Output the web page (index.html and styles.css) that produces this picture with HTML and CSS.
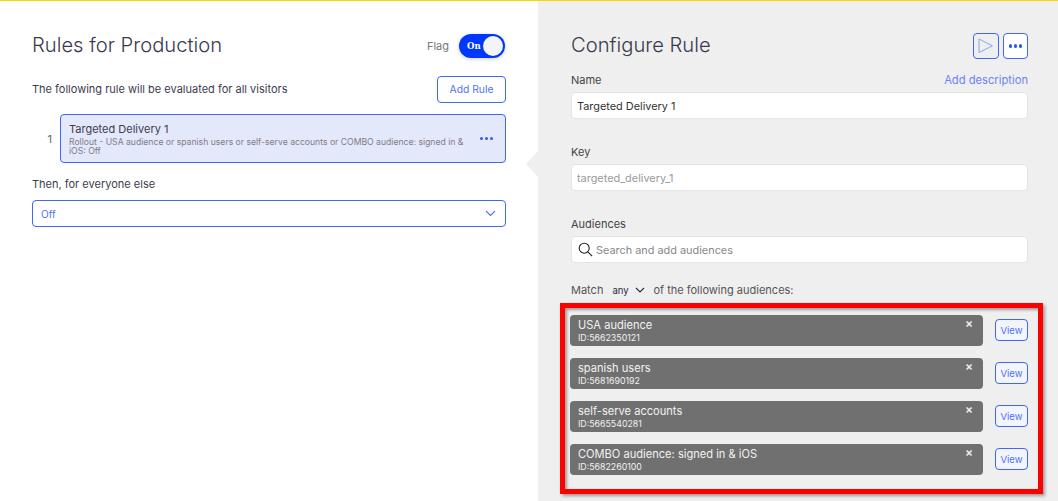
FILE: index.html
```html
<!DOCTYPE html>
<html lang="en">
<head>
<meta charset="utf-8">
<title>Rules for Production</title>
<link rel="stylesheet" href="styles.css">
</head>
<body>
<div class="topline"></div>
<main class="layout">
  <section class="left">
    <header class="left-head">
      <h1 class="title">Rules for Production</h1>
      <div class="flag">
        <span class="flag-label">Flag</span>
        <div class="toggle"><span class="toggle-text">On</span><span class="knob"></span></div>
      </div>
    </header>
    <div class="rule-intro">
      <span>The following rule will be evaluated for all visitors</span>
      <button class="btn add-rule">Add Rule</button>
    </div>
    <div class="rule-row">
      <span class="rule-num">1</span>
      <div class="rule-card">
        <div class="rule-body">
          <div class="rule-name">Targeted Delivery 1</div>
          <div class="rule-desc">Rollout - USA audience or spanish users or self-serve accounts or COMBO audience: signed in &amp; iOS: Off</div>
        </div>
        <div class="dots"><i></i><i></i><i></i></div>
      </div>
    </div>
    <div class="then">Then, for everyone else</div>
    <div class="select">
      <span>Off</span>
      <svg width="11" height="7" viewBox="0 0 11 7" fill="none" stroke="#4f73f5" stroke-width="1.1"><path d="M1 1l4.5 4.5L10 1"/></svg>
    </div>
  </section>
  <section class="right">
    <div class="pointer"></div>
    <header class="right-head">
      <h2 class="title">Configure Rule</h2>
      <div class="actions">
        <button class="icon-btn play"><svg width="16" height="16" viewBox="0 0 16 16" fill="none" stroke="#8ba3f7" stroke-width="1"><path d="M1 1v13.5l13.5-6.7z"/></svg></button>
        <button class="icon-btn"><span class="dots"><i></i><i></i><i></i></span></button>
      </div>
    </header>
    <div class="label-row name-row"><label>Name</label><a class="link">Add description</a></div>
    <div class="field">Targeted Delivery 1</div>
    <div class="label-row"><label>Key</label></div>
    <div class="field muted">targeted_delivery_1</div>
    <div class="label-row"><label>Audiences</label></div>
    <div class="field search">
      <svg width="15" height="15" viewBox="0 0 15 15" fill="none" stroke="#222" stroke-width="1.1"><circle cx="6.2" cy="6.2" r="5"/><path d="M9.8 9.8l4.4 4.4"/></svg>
      <span>Search and add audiences</span>
    </div>
    <div class="match">
      <span>Match</span>
      <span class="any">any
        <svg width="10" height="6" viewBox="0 0 10 6" fill="none" stroke="#2b2b3d" stroke-width="1.1"><path d="M1 1l4 4 4-4"/></svg>
      </span>
      <span>of the following audiences:</span>
    </div>
    <ul class="audiences">
      <li class="aud">
        <div class="chip"><div class="chip-name">USA audience</div><div class="chip-id">ID:5662350121</div><span class="chip-x">×</span></div>
        <button class="btn view">View</button>
      </li>
      <li class="aud">
        <div class="chip"><div class="chip-name">spanish users</div><div class="chip-id">ID:5681690192</div><span class="chip-x">×</span></div>
        <button class="btn view">View</button>
      </li>
      <li class="aud">
        <div class="chip"><div class="chip-name">self-serve accounts</div><div class="chip-id">ID:5665540281</div><span class="chip-x">×</span></div>
        <button class="btn view">View</button>
      </li>
      <li class="aud">
        <div class="chip"><div class="chip-name">COMBO audience: signed in &amp; iOS</div><div class="chip-id">ID:5682260100</div><span class="chip-x">×</span></div>
        <button class="btn view">View</button>
      </li>
    </ul>
    <div class="highlight"></div>
  </section>
</main>
</body>
</html>
```
FILE: styles.css
```css
* { box-sizing: border-box; }
html, body { margin: 0; padding: 0; height: 100%; overflow: hidden; }
body { font-family: Inter, "Liberation Sans", sans-serif; font-size: 11px; color: #3c3c50; background: #fff; }
.topline { height: 1px; background: #ffd400; }
.layout { display: flex; height: 500px; }
.left { width: 538px; padding: 33px 32px 0; }
.right { position: relative; flex: 1; background: #efefef; padding: 32px 30px 0 33px; }
.title { margin: 0 0 2px; font-size: 20.2px; font-weight: 300; line-height: 24px; color: #3a3a4c; }
.left-head { display: flex; justify-content: space-between; align-items: center; height: 24px; padding-right: 1px; }
.flag { display: flex; align-items: center; gap: 10px; }
.flag-label { color: #777; font-size: 11px; }
.toggle { width: 46px; height: 24px; border-radius: 12px; background: #0037ff; position: relative; box-shadow: 0 1px 4px rgba(0,0,0,.2); }
.toggle-text { position: absolute; left: 8px; top: 5px; color: #fff; font: bold 8.5px/14px "DejaVu Serif", serif; }
.knob { position: absolute; right: 2px; top: 2px; width: 20px; height: 20px; border-radius: 50%; background: #f4f4f6; }
.rule-intro { display: flex; justify-content: space-between; align-items: center; margin-top: 18px; height: 27px; line-height: 24px; }
.rule-intro > span { margin-bottom: 2px; }
.btn { font: inherit; background: #fff; color: #4f73f5; border: 1px solid #3f66f4; border-radius: 4px; padding: 0; }
.add-rule { width: 69px; height: 27px; font-size: 10.3px; margin-top: -1px; }
.rule-row { display: flex; align-items: center; margin-top: 11px; }
.rule-num { width: 28px; padding-right: 8px; text-align: right; color: #666; }
.rule-card { flex: 1; height: 49px; display: flex; align-items: center; background: #e4e8fb; border: 1px solid #3f66f4; border-radius: 4px; padding: 0 12px 0 8px; }
.rule-body { flex: 1; min-width: 0; }
.rule-name { font-size: 11px; line-height: 14px; color: #3c3c50; margin-bottom: 2px; }
.rule-desc { font-size: 8.65px; line-height: 9px; color: #7d7d88; padding-right: 12px; }
.dots { display: inline-flex; gap: 1.5px; }
.dots i { width: 3.5px; height: 3.5px; border-radius: 50%; background: #3358e8; }
.then { margin-top: 14px; line-height: 14px; }
.select { display: flex; justify-content: space-between; align-items: center; height: 27px; margin-top: 9px; padding: 0 9px 0 8px; background: #fff; border: 1px solid #3f66f4; border-radius: 4px; color: #4f73f5; font-size: 10px; }
.pointer { position: absolute; left: -12px; top: 150px; width: 0; height: 0; border-style: solid; border-width: 13px 12px 13px 0; border-color: transparent #efefef transparent transparent; }
.right-head { display: flex; justify-content: space-between; align-items: center; height: 26px; }
.actions { display: flex; gap: 4px; }
.icon-btn { display: flex; align-items: center; justify-content: center; width: 25px; height: 26px; padding: 0; background: #fff; border: 1px solid #3f66f4; border-radius: 4px; }
.icon-btn.play { width: 26px; background: #efefef; }
.label-row { display: flex; justify-content: space-between; align-items: center; height: 14px; margin-top: 26px; line-height: 14px; }
.name-row { margin-top: 14px; }
.label-row label { color: #444; }
.link { color: #6c83f5; font-size: 11.2px; }
.field { display: flex; align-items: center; height: 27px; margin-top: 5px; padding: 0 5px; background: #fff; border: 1px solid #e3e3e3; border-radius: 4px; color: #333; font-size: 10.9px; }
.muted { color: #999; }
.search { gap: 3px; color: #888; padding-left: 6px; }
.match { display: flex; align-items: center; height: 14px; margin-top: 20px; color: #555; }
.any { position: relative; display: inline-flex; align-items: center; gap: 6px; width: 50px; padding-left: 9px; font-size: 9.5px; color: #2b2b3d; }
.any::after { content: ""; position: absolute; left: 0; right: 1px; top: 19px; height: 1px; background: #c8c8c8; }
.audiences { list-style: none; margin: 18px 0 0; padding: 0; display: flex; flex-direction: column; gap: 12px; }
.aud { display: flex; align-items: flex-start; justify-content: space-between; margin-left: -1px; }
.chip { position: relative; width: 413px; height: 31px; padding: 3px 8px; background: #707070; border-radius: 4px; color: #fff; }
.chip-name { font-size: 11.1px; line-height: 14px; color: #f2f2f2; }
.chip-id { font-size: 8.8px; line-height: 11px; color: #f2f2f2; }
.chip-x { position: absolute; right: 10px; top: 1px; font-size: 12px; line-height: 14px; font-weight: 600; color: #eee; }
.view { width: 33px; height: 22px; margin-top: 4px; font-size: 9.5px; background: #f2f4fe; }
.highlight { position: absolute; left: 22px; top: 302px; width: 483px; height: 191px; border: 5px solid #f00; box-shadow: 2px 2px 3px rgba(0,0,0,.35), inset 2px 2px 3px rgba(0,0,0,.35); pointer-events: none; }
```
